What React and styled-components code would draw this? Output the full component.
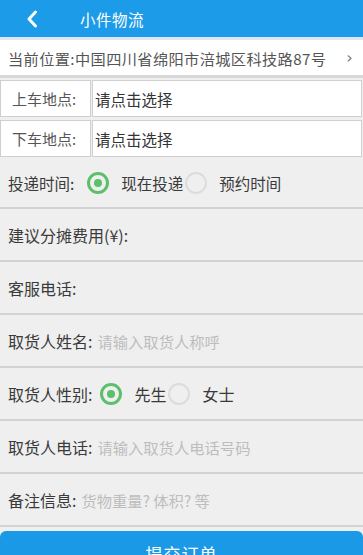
import React from "react";
import styled, { createGlobalStyle } from "styled-components";

const Global = createGlobalStyle`
  html, body {
    margin: 0;
    padding: 0;
    background: #efefef;
    font-family: "Noto Sans CJK SC", "Noto Sans", sans-serif;
    overflow: hidden;
  }
`;

const Page = styled.div`
  width: 363px;
  height: 555px;
  background: #efefef;
  overflow: hidden;
`;

const Header = styled.div`
  height: 37px;
  background: #1c9be8;
  display: flex;
  align-items: center;
  color: #fff;
`;

const Back = styled.div`
  width: 80px;
  padding-left: 26px;
  box-sizing: border-box;
  display: flex;
  align-items: center;
`;

const Title = styled.div`
  font-size: 15.5px;
  letter-spacing: 0.5px;
`;

const Location = styled.div`
  height: 35px;
  background: #fff;
  border-top: 3px solid #dfe7ee;
  border-bottom: 3px solid #d8d8d8;
  display: flex;
  align-items: center;
  justify-content: space-between;
  padding: 0 8px;
  font-size: 15.2px;
  letter-spacing: 0.4px;
  color: #555;
`;

const Arrow = styled.span`
  color: #777;
  font-size: 16px;
  font-family: "DejaVu Sans", sans-serif;
  margin-right: 2px;
`;

const Pickers = styled.div`
  display: flex;
  flex-direction: column;
  gap: 3px;
  padding: 2px 0 1px;
`;

const PickRow = styled.div`
  display: flex;
  height: 37px;
  gap: 1px;
`;

const PickLabel = styled.div`
  width: 91px;
  box-sizing: border-box;
  background: #fff;
  border: 1px solid #cfcfcf;
  display: flex;
  align-items: center;
  padding-left: 11px;
  font-size: 15px;
  color: #555;
`;

const PickInput = styled.div`
  flex: 1;
  box-sizing: border-box;
  background: #fff;
  border: 1px solid #cfcfcf;
  margin-right: 1px;
  display: flex;
  align-items: center;
  padding-left: 2px;
  font-size: 15.5px;
  color: #333;
`;

const Row = styled.div`
  height: ${(p) => p.h || 51}px;
  border-bottom: 2px solid #d2d2d2;
  display: flex;
  align-items: center;
  padding-left: 8px;
  font-size: ${(p) => p.size || 16}px;
  color: #3a3a3a;
`;

const Placeholder = styled.span`
  color: #bdbdbd;
  font-size: 15.3px;
  margin-left: 5px;
`;

const Radio = styled.span`
  width: 22px;
  height: 22px;
  box-sizing: border-box;
  border-radius: 50%;
  border: ${(p) => (p.checked ? "3px solid #5cbf6a" : "2px solid #dcdcdc")};
  display: inline-flex;
  align-items: center;
  justify-content: center;
  margin: 0 12px 0 ${(p) => p.gap || 0}px;
  &::after {
    content: "";
    width: 8px;
    height: 8px;
    border-radius: 50%;
    background: ${(p) => (p.checked ? "#5cbf6a" : "transparent")};
  }
`;

const Submit = styled.button`
  display: block;
  width: 100%;
  height: 46px;
  margin-top: 4px;
  border: none;
  border-radius: 6px;
  background: #1a9ae6;
  color: #fff;
  font-family: "Noto Sans CJK SC", sans-serif;
  font-size: 17px;
  letter-spacing: 1px;
  padding: 0;
  line-height: 40px;
`;

export default function App() {
  return (
    <Page>
      <Global />
      <Header>
        <Back>
          <svg width="12" height="18" viewBox="0 0 12 18">
            <path d="M9.5 2 L3 9 L9.5 16" fill="none" stroke="#fff" strokeWidth="3" strokeLinecap="round" strokeLinejoin="round" />
          </svg>
        </Back>
        <Title>小件物流</Title>
      </Header>
      <Location>
        <span>当前位置:中国四川省绵阳市涪城区科技路87号</span>
        <Arrow>›</Arrow>
      </Location>
      <Pickers>
        <PickRow>
          <PickLabel>上车地点:</PickLabel>
          <PickInput>请点击选择</PickInput>
        </PickRow>
        <PickRow>
          <PickLabel>下车地点:</PickLabel>
          <PickInput>请点击选择</PickInput>
        </PickRow>
      </Pickers>
      <Row h={49} size={15.5}>
        投递时间:
        <Radio checked gap={13} />
        现在投递
        <Radio gap={2} />
        预约时间
      </Row>
      <Row>建议分摊费用(¥):</Row>
      <Row>客服电话:</Row>
      <Row>
        取货人姓名:<Placeholder>请输入取货人称呼</Placeholder>
      </Row>
      <Row>
        取货人性别:
        <Radio checked gap={8} />
        先生
        <Radio gap={2} />
        女士
      </Row>
      <Row>
        取货人电话:<Placeholder>请输入取货人电话号码</Placeholder>
      </Row>
      <Row>
        备注信息:<Placeholder>货物重量? 体积? 等</Placeholder>
      </Row>
      <Submit>提交订单</Submit>
    </Page>
  );
}
